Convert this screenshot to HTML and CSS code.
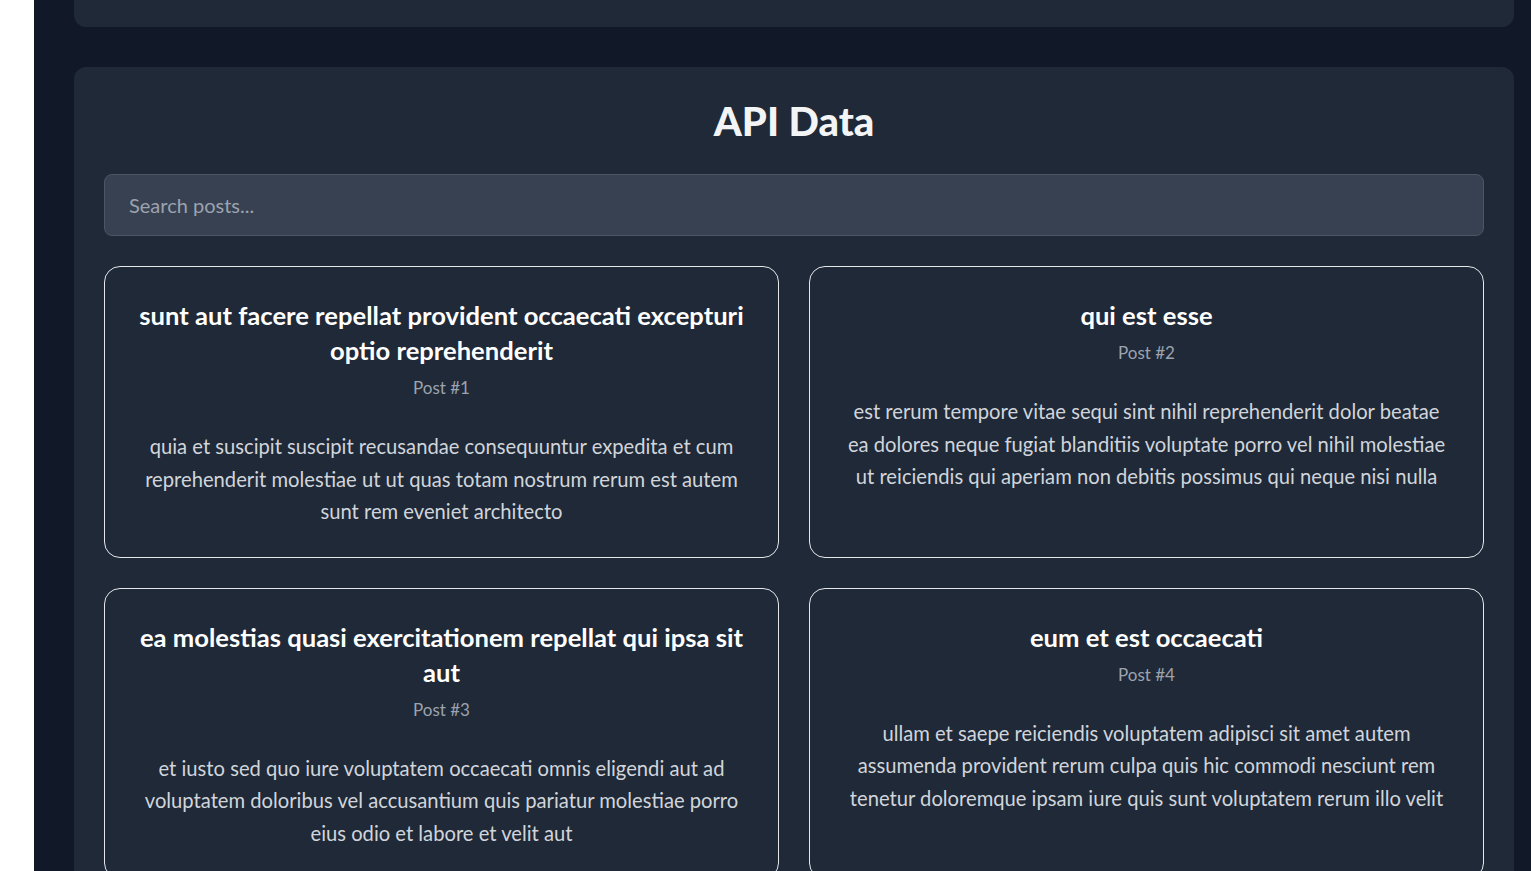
FILE: index.html
```html
<!DOCTYPE html>
<html>
<head>
<meta charset="utf-8">
<link rel="stylesheet" href="styles.css">
</head>
<body>
<div class="app">
  <div class="top-card"></div>
  <section class="panel">
    <h1 class="panel-title">API Data</h1>
    <input class="search" type="text" placeholder="Search posts...">
    <div class="posts">
      <article class="post">
        <h2 class="post-title">sunt aut facere repellat provident occaecati excepturi optio reprehenderit</h2>
        <div class="post-id">Post #1</div>
        <p class="post-body">quia et suscipit suscipit recusandae consequuntur expedita et cum reprehenderit molestiae ut ut quas totam nostrum rerum est autem sunt rem eveniet architecto</p>
      </article>
      <article class="post">
        <h2 class="post-title">qui est esse</h2>
        <div class="post-id">Post #2</div>
        <p class="post-body">est rerum tempore vitae sequi sint nihil reprehenderit dolor beatae ea dolores neque fugiat blanditiis voluptate porro vel nihil molestiae ut reiciendis qui aperiam non debitis possimus qui neque nisi nulla</p>
      </article>
      <article class="post">
        <h2 class="post-title">ea molestias quasi exercitationem repellat qui ipsa sit aut</h2>
        <div class="post-id">Post #3</div>
        <p class="post-body">et iusto sed quo iure voluptatem occaecati omnis eligendi aut ad voluptatem doloribus vel accusantium quis pariatur molestiae porro eius odio et labore et velit aut</p>
      </article>
      <article class="post">
        <h2 class="post-title">eum et est occaecati</h2>
        <div class="post-id">Post #4</div>
        <p class="post-body">ullam et saepe reiciendis voluptatem adipisci sit amet autem assumenda provident rerum culpa quis hic commodi nesciunt rem tenetur doloremque ipsam iure quis sunt voluptatem rerum illo velit</p>
      </article>
    </div>
  </section>
</div>
</body>
</html>
```
FILE: styles.css
```css
html, body {
  margin: 0;
  padding: 0;
  background: #ffffff;
  height: 100%;
  overflow: hidden;
}
body {
  font-family: Lato, "Open Sans", sans-serif;
}
.app {
  margin-left: 34px;
  min-height: 100%;
  background: #111827;
  padding: 0 17px 0 40px;
  display: flex;
  flex-direction: column;
  gap: 40px;
}
.top-card {
  height: 27px;
  background: #1f2937;
  border-radius: 0 0 12px 12px;
}
.panel {
  background: #1f2937;
  border-radius: 12px;
  padding: 29px 30px 40px;
}
.panel-title {
  margin: 0 0 28px;
  text-align: center;
  color: #f3f4f6;
  font-family: "Lato Black", Lato, sans-serif;
  font-size: 40px;
  font-weight: 900;
  line-height: 50px;
}
.search {
  display: block;
  box-sizing: border-box;
  width: 100%;
  height: 62px;
  padding: 0 24px;
  background: #374151;
  border: 1px solid #4b5563;
  border-radius: 8px;
  color: #e5e7eb;
  font-family: inherit;
  font-size: 20px;
  outline: none;
}
.search::placeholder {
  color: #9ca3af;
}
.posts {
  margin-top: 30px;
  display: grid;
  grid-template-columns: 1fr 1fr;
  gap: 30px 30px;
}
.post {
  border: 1px solid #e5e7eb;
  border-radius: 16px;
  padding: 31px 32px 29px;
  text-align: center;
}
.post-title {
  margin: 0;
  color: #ffffff;
  font-size: 25.6px;
  font-weight: 700;
  line-height: 35px;
}
.post-id {
  margin-top: 8px;
  color: #9ca3af;
  font-size: 17px;
  line-height: 24px;
}
.post-body {
  margin: 30px 0 0;
  color: #d1d5db;
  font-size: 20.2px;
  line-height: 32.5px;
}
```
